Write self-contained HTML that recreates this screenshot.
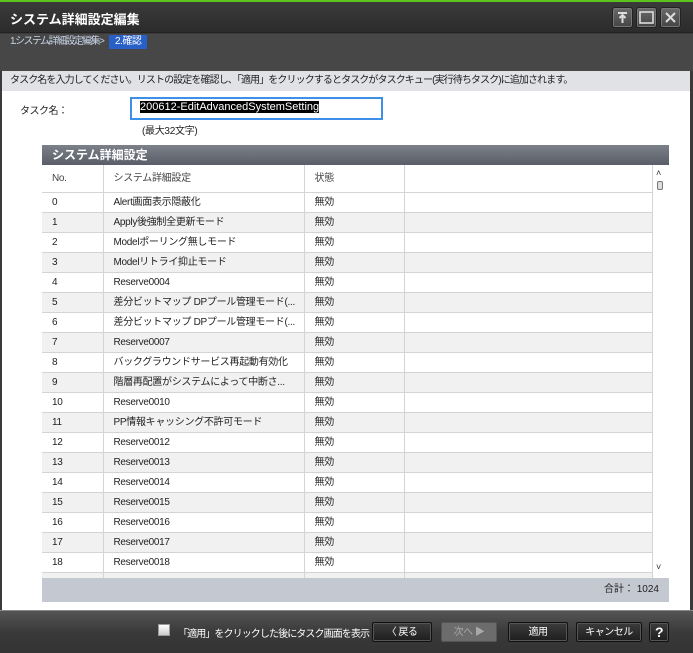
<!DOCTYPE html>
<html><head><meta charset="utf-8"><style>
*{margin:0;padding:0;box-sizing:border-box}
body{width:693px;height:653px;background:#3a3a3a;font-family:"Liberation Sans","Noto Sans CJK JP",sans-serif;font-size:11px;position:relative;overflow:hidden;color:#222}
.a{position:absolute;white-space:nowrap}
.wb{position:absolute;top:7px;width:21px;height:21px;border:1px solid #222;border-radius:3px;background:linear-gradient(#6a6a6a,#444);box-shadow:inset 0 0 0 1px #777}
.btn{position:absolute;top:622px;height:20px;border:1px solid #111;border-radius:2px;background:linear-gradient(#3c3c3c,#1e1e1e);color:#fff;font-size:10px;text-align:center;line-height:19px;box-shadow:inset 0 0 0 1px #555;letter-spacing:-0.5px}
table{border-collapse:collapse;position:absolute;left:42px;top:165px;width:611px;font-size:10px;letter-spacing:-0.3px;table-layout:fixed}
td{height:20px;line-height:19px;border-right:1px solid #d4d4d4;border-bottom:1px solid #d4d4d4;padding-left:10px;white-space:nowrap;overflow:hidden;vertical-align:middle}
tr:nth-child(odd) td{background:#f1f1f1}
tr:nth-child(even) td{background:#fff}
tr.h td{background:#fff;height:27px;color:#444}
</style></head><body>
<div class="a" style="left:0;top:0;width:693px;height:2px;background:#5ec21e"></div>
<div class="a" style="left:0;top:2px;width:693px;height:31px;background:linear-gradient(#3a3a3a,#2c2c2c);border-bottom:1px solid #222"></div>
<div class="a" style="left:10px;top:9px;color:#fff;font-weight:bold;font-size:13px">システム詳細設定編集</div>
<div class="wb" style="left:612px"><svg width="19" height="19"><path d="M5 5h9M9.5 7v8M6.5 10l3-3 3 3" stroke="#ddd" stroke-width="2" fill="none"/></svg></div>
<div class="wb" style="left:636px"><svg width="19" height="19"><rect x="3" y="4" width="13" height="11" stroke="#ddd" stroke-width="1.6" fill="none"/></svg></div>
<div class="wb" style="left:660px"><svg width="19" height="19"><path d="M5 5l9 9M14 5l-9 9" stroke="#ddd" stroke-width="2"/></svg></div>
<div class="a" style="left:0;top:34px;width:693px;height:37px;background:#474747"></div>
<div class="a" style="left:10px;top:35px;color:#c8d4e8;font-size:10px;letter-spacing:-1.6px;line-height:14px">1.システム詳細設定編集</div>
<div class="a" style="left:99px;top:35px;color:#c8d4e8;font-size:10px;line-height:14px">&gt;</div>
<div class="a" style="left:109px;top:35px;width:38px;height:14px;background:#2860c8;color:#fff;font-size:10px;padding-left:6px;line-height:14px;letter-spacing:-0.5px">2.確認</div>
<div class="a" style="left:2px;top:71px;width:688px;height:20px;background:#e0e2e6;color:#222;font-size:10px;padding-left:8px;line-height:19px;letter-spacing:-0.9px">タスク名を入力してください。リストの設定を確認し、「適用」をクリックするとタスクがタスクキュー(実行待ちタスク)に追加されます。</div>
<div class="a" style="left:2px;top:91px;width:688px;height:519px;background:#fff"></div>
<div class="a" style="left:20px;top:102px;font-size:10px;letter-spacing:-0.5px">タスク名：</div>
<div class="a" style="left:130px;top:97px;width:253px;height:23px;border:2px solid #3d8fe8;padding:2px 0 0 8px"><span style="background:#000;color:#fff;font-size:11px">200612-EditAdvancedSystemSetting</span></div>
<div class="a" style="left:142px;top:122px;font-size:10px;letter-spacing:-0.3px">(最大32文字)</div>
<div class="a" style="left:42px;top:145px;width:627px;height:20px;background:linear-gradient(#7c8089,#5a5e68);color:#fff;font-weight:bold;font-size:12px;padding-left:10px;line-height:20px">システム詳細設定</div>
<div class="a" style="left:653px;top:165px;width:16px;height:413px;background:#fff"></div>
<div class="a" style="left:656px;top:168px;font-size:9px;color:#333">˄</div>
<div class="a" style="left:657px;top:181px;width:6px;height:9px;border:1px solid #777;border-radius:2px;background:#ddd"></div>
<div class="a" style="left:656px;top:562px;font-size:9px;color:#333">˅</div>
<table>
<colgroup><col style="width:61px"><col style="width:201px"><col style="width:100px"><col></colgroup>
<tr class="h"><td>No.</td><td>システム詳細設定</td><td>状態</td><td></td></tr>
<tr><td>0</td><td>Alert画面表示隠蔽化</td><td>無効</td><td></td></tr>
<tr><td>1</td><td>Apply後強制全更新モード</td><td>無効</td><td></td></tr>
<tr><td>2</td><td>Modelポーリング無しモード</td><td>無効</td><td></td></tr>
<tr><td>3</td><td>Modelリトライ抑止モード</td><td>無効</td><td></td></tr>
<tr><td>4</td><td>Reserve0004</td><td>無効</td><td></td></tr>
<tr><td>5</td><td>差分ビットマップ DPプール管理モード(...</td><td>無効</td><td></td></tr>
<tr><td>6</td><td>差分ビットマップ DPプール管理モード(...</td><td>無効</td><td></td></tr>
<tr><td>7</td><td>Reserve0007</td><td>無効</td><td></td></tr>
<tr><td>8</td><td>バックグラウンドサービス再起動有効化</td><td>無効</td><td></td></tr>
<tr><td>9</td><td>階層再配置がシステムによって中断さ...</td><td>無効</td><td></td></tr>
<tr><td>10</td><td>Reserve0010</td><td>無効</td><td></td></tr>
<tr><td>11</td><td>PP情報キャッシング不許可モード</td><td>無効</td><td></td></tr>
<tr><td>12</td><td>Reserve0012</td><td>無効</td><td></td></tr>
<tr><td>13</td><td>Reserve0013</td><td>無効</td><td></td></tr>
<tr><td>14</td><td>Reserve0014</td><td>無効</td><td></td></tr>
<tr><td>15</td><td>Reserve0015</td><td>無効</td><td></td></tr>
<tr><td>16</td><td>Reserve0016</td><td>無効</td><td></td></tr>
<tr><td>17</td><td>Reserve0017</td><td>無効</td><td></td></tr>
<tr><td>18</td><td>Reserve0018</td><td>無効</td><td></td></tr>
<tr><td style="height:6px"></td><td style="height:6px"></td><td style="height:6px"></td><td style="height:6px"></td></tr>
</table>
<div class="a" style="left:42px;top:578px;width:627px;height:24px;background:#c4c8d0;text-align:right;padding-right:10px;line-height:24px;font-size:10px">合計： 1024</div>
<div class="a" style="left:0;top:610px;width:693px;height:43px;background:linear-gradient(#555,#3a3a3a 50%,#333);border-top:1px solid #888"></div>
<div class="a" style="left:158px;top:624px;width:12px;height:12px;background:linear-gradient(#fff,#ccc);border:1px solid #999"></div>
<div class="a" style="left:178px;top:625px;color:#fff;font-size:10px;letter-spacing:-0.9px">「適用」をクリックした後にタスク画面を表示</div>
<div class="btn" style="left:372px;width:60px">〈 戻る</div>
<div class="btn" style="left:441px;width:56px;background:#6c6c6c;color:#aaa;border-color:#555;box-shadow:none">次へ ▶</div>
<div class="btn" style="left:508px;width:60px">適用</div>
<div class="btn" style="left:576px;width:66px">キャンセル</div>
<div class="btn" style="left:649px;width:20px;font-weight:bold;font-size:14px">?</div>
</body></html>
